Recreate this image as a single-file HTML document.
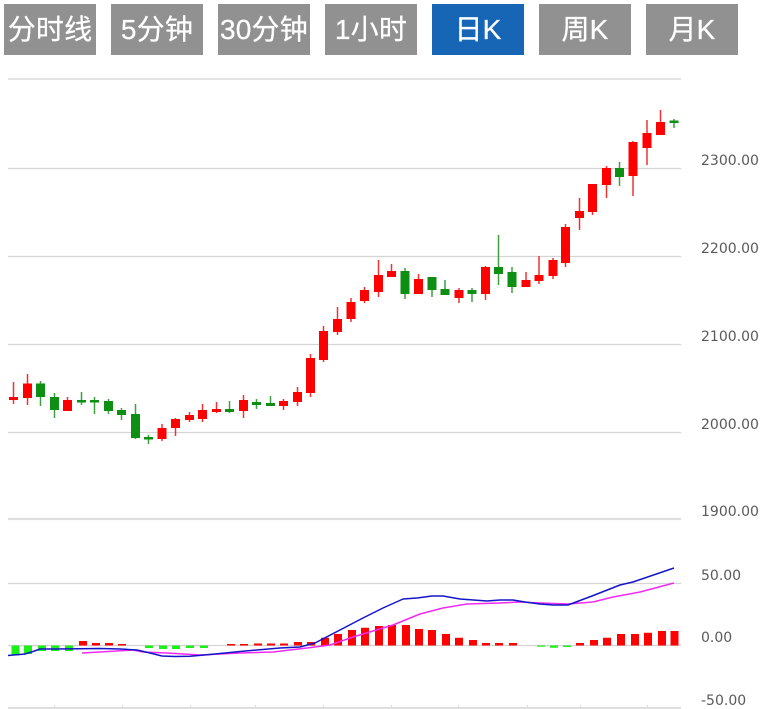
<!DOCTYPE html>
<html><head><meta charset="utf-8"><style>
html,body{margin:0;padding:0;background:#fff}
body{width:765px;height:709px;position:relative;overflow:hidden}
.b{position:absolute;top:4px;width:92px;height:51px;line-height:51px;background:#919191;color:#fff;text-align:center;font:28px/51px "Liberation Sans","Noto Sans CJK SC",sans-serif;white-space:nowrap;-webkit-text-stroke:.25px #fff;letter-spacing:.2px}
.a{background:#1766b6}
svg{position:absolute;left:0;top:0}
text{font:14px "DejaVu Sans",sans-serif;fill:#5a5a5a}
.c{filter:blur(.35px)}
</style></head><body>
<div class="b" style="left:4px">分时线</div>
<div class="b" style="left:111px">5分钟</div>
<div class="b" style="left:218px">30分钟</div>
<div class="b" style="left:325px">1小时</div>
<div class="b a" style="left:432px">日K</div>
<div class="b" style="left:539px">周K</div>
<div class="b" style="left:646px">月K</div>
<svg width="765" height="709" viewBox="0 0 765 709">
<g class="c">
<path d="M8 79H681M8 168.500H681M8 256.500H681M8 344.500H681M8 432.500H681M8 583.500H681M8 645.500H681" stroke="#d4d4d4" stroke-width="1.200" fill="none"/>
<path d="M8 519H681M8 708H681" stroke="#dedede" stroke-width="2.200" fill="none"/>
<path d="M54.500 705V708M122.500 705V708M190.500 705V708M255.500 705V708M323.500 705V708M391.500 705V708M458.500 705V708M527.500 705V708M580.500 705V708M647.500 705V708" stroke="#ddd" fill="none"/>
<path stroke="#f01c1c" stroke-width="1.500" stroke-opacity=".9" fill="none" d="M13.500 382V404M27.500 374V405M67.500 397V411M162 424V441M175.500 418V436M189.500 412V422M202.500 404V422M216.500 402V413M243.500 395V418M283.500 399V410M297.500 387V406M310.500 354V397M323.500 326V362M337.500 307V335M351 298V322M364.500 287V303M378.500 260V297M391.500 264V277M418.500 274V294M459 288V303M485.500 266V300M526 272V287M539 256V284M553 258V279M565.500 224V267M579.500 198V230M592.500 184V215M606.500 166V198M633 141V196M647 120V165M660.500 110V135"/>
<path fill="#f00" d="M9 397h9v3h-9zM23 383.500h9V398h-9zM63 400h9v11h-9zM157.500 428h9v11h-9zM171 419h9v9h-9zM185 415h9v5h-9zM198 410h9v9h-9zM212 409h9v3h-9zM239 400h9v11h-9zM279 401h9v5h-9zM293 392h9v10h-9zM306 358h9v35h-9zM319 331h9v29h-9zM333 319h9v13h-9zM346.500 302h9v17h-9zM360 290h9v11h-9zM374 275h9v17h-9zM387 271h9v6h-9zM414 279h9v15h-9zM454.500 290h9v8h-9zM481 267h9v27h-9zM521.500 280h9v7h-9zM534.500 275h9v6h-9zM548.500 260h9v16h-9zM561 227h9v36h-9zM575 211h9v7h-9zM588 184h9v28h-9zM602 168h9v17h-9zM628.500 142h9v34h-9zM642.500 133h9v15h-9zM656 122h9v13h-9z"/>
<path stroke="#1a9020" stroke-width="1.500" stroke-opacity=".85" fill="none" d="M40.500 381V406M54.500 393V418M81.500 392V405M94.500 397V414M108.500 399V414M121.500 408V420M135.500 404V439M148.500 435V444M229.500 401V413M256.500 399V409M270.500 396V406M405 268V299M432 277V297M445 280V295M472 288V302M498.500 235V285M512 267V293M619.500 162V186M674 119V128"/>
<path fill="#0c8f12" d="M36 383.500h9V397h-9zM50 397h9v13h-9zM77 400h9v2.500h-9zM90 400h9v2.500h-9zM104 401h9v10h-9zM117 410h9v5h-9zM131 414h9v24h-9zM144 437h9v2.500h-9zM225 409h9v3h-9zM252 402h9v3h-9zM266 403h9v3h-9zM400.500 271h9v23h-9zM427.500 277h9v13h-9zM440.500 289h9v6h-9zM467.500 290h9v4h-9zM494 267h9v7h-9zM507.500 272h9v15h-9zM615 168h9v9h-9zM669.500 120.500h9v2.500h-9z"/>
<path fill="#1bf01b" d="M11.500 645.500h8V655.500h-8zM24 645.500h8V654h-8zM38 645.500h8V651h-8zM51 645.500h8V651h-8zM65 645.500h8V651h-8zM145 645.500h8V648h-8zM159 645.500h8V649h-8zM172 645.500h8V649h-8zM186 645.500h8V648h-8zM200 645.500h8V648h-8zM537 645.500h8V646.700h-8zM550 645.500h8V647.700h-8zM563 645.500h8V647h-8z"/>
<path fill="#f00" d="M79 641h8v4.500h-8zM92 643h8v2.500h-8zM105 643h8v2.500h-8zM118 644h8v1.500h-8zM227 644h8v1.500h-8zM240 644h8v1.500h-8zM254 643.500h8v2h-8zM267 643.500h8v2h-8zM280 643.500h8v2h-8zM294 642h8v3.500h-8zM307 642h8v3.500h-8zM321 637.700h8v7.800h-8zM334 634h8v11.500h-8zM348 630h8v15.500h-8zM361 627.700h8v17.800h-8zM375 626h8v19.500h-8zM388 625h8v20.500h-8zM402 625h8v20.500h-8zM415 629h8v16.500h-8zM428 630h8v15.500h-8zM442 634h8v11.500h-8zM455 637.700h8v7.800h-8zM469 640h8v5.500h-8zM482 643h8v2.500h-8zM495 643h8v2.500h-8zM509 643h8v2.500h-8zM576 643h8v2.500h-8zM590 640h8v5.500h-8zM603 637.700h8v7.800h-8zM617 634h8v11.500h-8zM631 634h8v11.500h-8zM644 632.700h8v12.800h-8zM658 631h8v14.500h-8zM670.500 631h8v14.500h-8z"/>
<path fill="none" stroke="#f02bf0" stroke-width="1.500" stroke-linejoin="round" d="M82 653L100 652L133 650L143 652L167 653L200 655L240 653L273 652L307 648L330 645L353 637L373 631L393 625L420 614L443 608L467 604L500 603L520 602L540 603L568 604L593 602L613 597L640 592L674 583"/>
<path fill="none" stroke="#1414c8" stroke-width="1.500" stroke-linejoin="round" d="M8 655.500L25 654L33 651.500L40 649L55 649L80 648.700L100 648.500L120 649L137 650L150 653L162 656L175 656.500L190 656.300L210 654.500L240 651.500L280 648L300 647L315 643L340 630L363 618L383 608L403 599L417 598L432 596L443 596L460 599L487 601L500 600L513 600L525 602L540 604L553 605L568 605L592 596L620 585L633 582L674 568"/>
</g>
<text x="701" y="165">2300.00</text>
<text x="701" y="253">2200.00</text>
<text x="701" y="341">2100.00</text>
<text x="701" y="429">2000.00</text>
<text x="701" y="516">1900.00</text>
<text x="701" y="580">50.00</text>
<text x="701" y="642">0.00</text>
<text x="701" y="705">-50.00</text>
</svg>
</body></html>
